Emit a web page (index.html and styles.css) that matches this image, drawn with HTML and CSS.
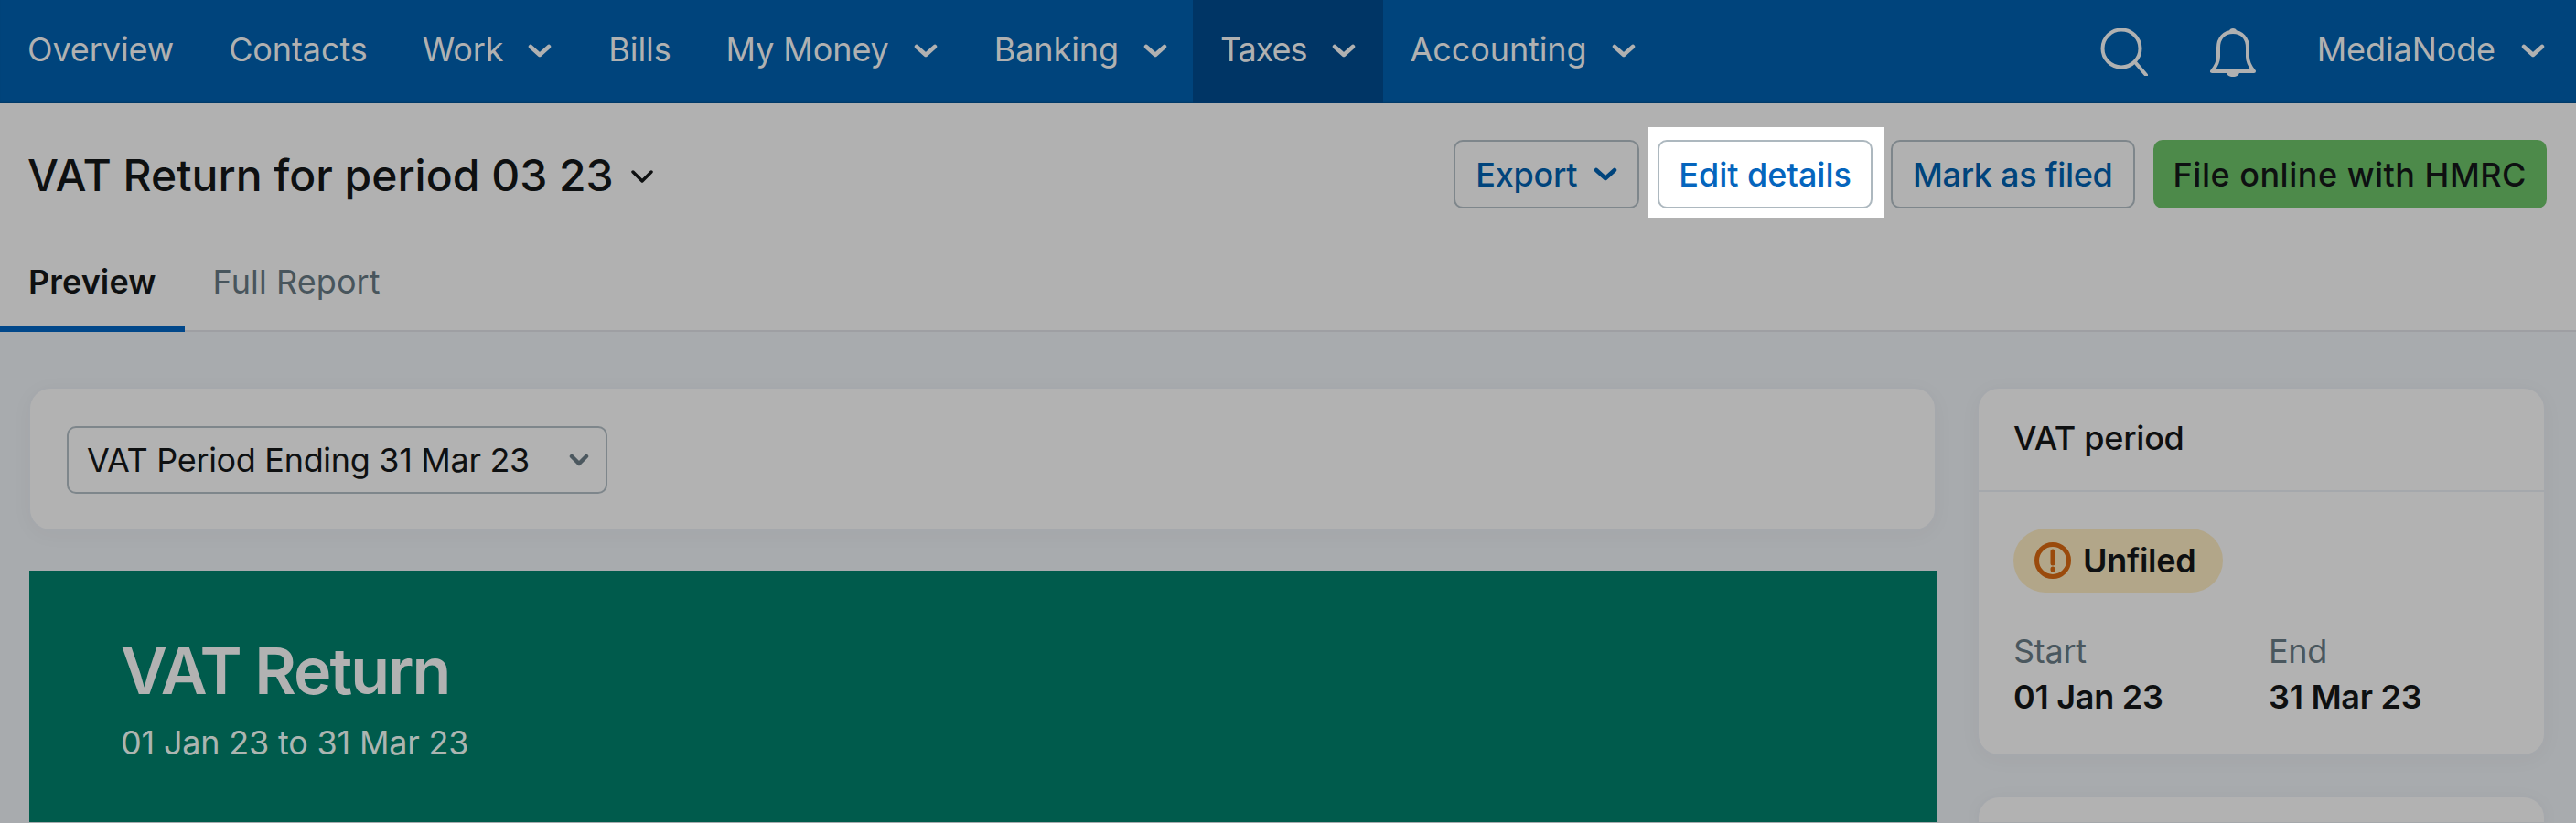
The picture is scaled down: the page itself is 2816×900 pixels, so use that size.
FILE: index.html
```html
<!DOCTYPE html>
<html lang="en">
<head>
    <meta charset="UTF-8">
    <title>VAT Return for period 03 23</title>
    <link rel="stylesheet" href="styles.css">
</head>
<body>
    <nav class="topnav">
        <a class="nav-item">Overview</a>
        <a class="nav-item">Contacts</a>
        <a class="nav-item">Work <svg class="chev" viewBox="0 0 26 15"><path d="M3 3l10 9 10-9"/></svg></a>
        <a class="nav-item">Bills</a>
        <a class="nav-item">My Money <svg class="chev" viewBox="0 0 26 15"><path d="M3 3l10 9 10-9"/></svg></a>
        <a class="nav-item">Banking <svg class="chev" viewBox="0 0 26 15"><path d="M3 3l10 9 10-9"/></svg></a>
        <a class="nav-item active">Taxes <svg class="chev" viewBox="0 0 26 15"><path d="M3 3l10 9 10-9"/></svg></a>
        <a class="nav-item">Accounting <svg class="chev" viewBox="0 0 26 15"><path d="M3 3l10 9 10-9"/></svg></a>
        <div class="nav-right">
            <svg class="icon-search" viewBox="0 0 52 52"><circle cx="23" cy="22" r="20.5"/><path d="M38 37l12 14"/></svg>
            <svg class="icon-bell" viewBox="0 0 50 54"><path d="M25 5c-10 0-16 7-16 17v10c0 6-2 10-7 16h46c-5-6-7-10-7-16V22c0-10-6-17-16-17z"/><path class="solid" d="M18 49h14c0 3-3 5-7 5s-7-2-7-5zM21 4c0-4 8-4 8 0v3h-8z"/></svg>
            <a class="nav-user">MediaNode <svg class="chev" viewBox="0 0 26 15"><path d="M3 3l10 9 10-9"/></svg></a>
        </div>
    </nav>

    <header class="page-head">
        <div class="title-row">
            <h1>VAT Return for period 03 23 <svg class="title-chev" viewBox="0 0 26 15"><path d="M3 2l10 10 10-10"/></svg></h1>
            <div class="actions">
                <button class="btn">Export <svg class="btn-chev" viewBox="0 0 26 15"><path d="M3 3l10 9 10-9"/></svg></button>
                <span class="spotlight"><button class="btn btn-edit">Edit details</button></span>
                <button class="btn">Mark as filed</button>
                <button class="btn btn-green">File online with HMRC</button>
            </div>
        </div>
        <div class="tabs">
            <a class="tab active">Preview</a>
            <a class="tab">Full Report</a>
        </div>
    </header>

    <main class="content">
        <section class="left-col">
            <div class="card period-card">
                <div class="select">VAT Period Ending 31 Mar 23 <svg class="select-chev" viewBox="0 0 22 14"><path d="M3 3l8 8 8-8"/></svg></div>
            </div>
            <div class="banner">
                <h2>VAT Return</h2>
                <p>01 Jan 23 to 31 Mar 23</p>
            </div>
        </section>
        <aside class="side-col">
            <div class="card side-card">
                <div class="side-head">VAT period</div>
                <div class="side-body">
                    <span class="pill">
                        <svg class="icon-warn" viewBox="0 0 40 40"><circle cx="20" cy="20" r="17.5"/><path d="M20 10v13"/><path d="M20 29v1"/></svg>
                        Unfiled
                    </span>
                    <div class="dates">
                        <div class="date-col"><span class="date-label">Start</span><strong>01 Jan 23</strong></div>
                        <div class="date-col"><span class="date-label">End</span><strong>31 Mar 23</strong></div>
                    </div>
                </div>
            </div>
            <div class="card next-card"></div>
        </aside>
    </main>
</body>
</html>
```

FILE: styles.css
```css
* {
    box-sizing: border-box;
}
html, body {
    height: 100%;
}
body {
    margin: 0;
    height: 900px;
    overflow: hidden;
    display: flex;
    flex-direction: column;
    background-color: #a8abae;
    color: #0e1011;
    font-family: "Inter", "Liberation Sans", sans-serif;
    font-size: 36px;
    letter-spacing: -0.27px;
}
svg {
    fill: none;
    display: block;
}

/* top nav */
.topnav {
    height: 113px;
    flex-shrink: 0;
    display: flex;
    background-color: #00447c;
    color: #b0b1b1;
    letter-spacing: -0.1px;
    box-shadow: inset 0 -3px 2px -1px #003a69;
}
.nav-item {
    display: flex;
    align-items: center;
    gap: 27px;
    padding: 0 30px 6px;
}
.nav-item .chev {
    margin-right: 2px;
}
.nav-item.active {
    margin-left: -4px;
    padding-right: 28px;
    background-color: #003565;
    letter-spacing: -1px;
}
.chev {
    width: 26px;
    height: 15px;
    margin-top: 4px;
    stroke: #b0b1b1;
    stroke-width: 4.5;
    stroke-linecap: round;
    stroke-linejoin: round;
}
.nav-right {
    margin-left: auto;
    display: flex;
    align-items: center;
    padding-right: 34px;
}
.icon-search {
    width: 52px;
    height: 52px;
    stroke: #b0b1b1;
    stroke-width: 4;
    stroke-linecap: round;
    margin-right: 68px;
}
.icon-bell {
    width: 50px;
    height: 54px;
    stroke: #b0b1b1;
    stroke-width: 4;
    stroke-linejoin: round;
    margin-right: 67px;
}
.icon-bell .solid {
    fill: #b0b1b1;
    stroke: none;
}
.nav-user {
    display: flex;
    align-items: center;
    gap: 28px;
    padding-bottom: 6px;
}

/* page heading */
.page-head {
    height: 250px;
    flex-shrink: 0;
    padding-top: 40px;
    background-color: #b1b1b1;
    border-bottom: 2px solid #9e9fa3;
}
.title-row {
    height: 75px;
    display: flex;
    justify-content: space-between;
    align-items: center;
    padding: 0 32px 0 30px;
}
h1 {
    margin: 2px 0 0;
    font-size: 48px;
    font-weight: 500;
    letter-spacing: 0;
    display: flex;
    align-items: center;
    gap: 18px;
}
.title-chev {
    width: 26px;
    height: 15px;
    margin-top: 4px;
    stroke: #0e1011;
    stroke-width: 3.5;
    stroke-linecap: round;
    stroke-linejoin: round;
}
.actions {
    display: flex;
    gap: 20px;
}
.btn {
    height: 75px;
    padding: 0 22px;
    display: flex;
    align-items: center;
    gap: 18px;
    background: transparent;
    border: 2px solid #7e868b;
    border-radius: 10px;
    color: #00447c;
    font-family: inherit;
    font-size: 36px;
    font-weight: 500;
    letter-spacing: inherit;
}
.btn-chev {
    width: 26px;
    height: 15px;
    stroke: #00447c;
    stroke-width: 4.5;
    stroke-linecap: round;
    stroke-linejoin: round;
}
.spotlight {
    display: block;
    margin: -14px -13px -10px -10px;
    padding: 14px 13px 10px 10px;
    background-color: #fff;
}
.btn-edit {
    padding: 0 21px;
    background-color: #fff;
    border-color: #adb8bf;
    color: #0565bd;
    letter-spacing: 0;
}
.btn-green {
    padding: 0 20px;
    background-color: #4d8a4a;
    border-color: #4d8a4a;
    color: #0e1011;
    letter-spacing: 0.5px;
}

/* tabs */
.tabs {
    display: flex;
    height: 110px;
    margin-top: 25px;
    letter-spacing: 0.1px;
}
.tab {
    height: 110px;
    padding: 0 31px;
    display: flex;
    align-items: center;
    color: #48555c;
}
.tab.active {
    color: #0e1011;
    font-weight: 600;
    border-bottom: 7px solid #00478a;
    padding-top: 7px;
}

/* main area */
.content {
    flex: 1;
    min-height: 0;
    display: flex;
    gap: 44px;
    padding: 60px 33px 1px 31px;
}
.left-col {
    width: 2086px;
    flex-shrink: 0;
    display: flex;
    flex-direction: column;
    gap: 43px;
}
.side-col {
    flex: 1;
    min-width: 0;
    display: flex;
    flex-direction: column;
    gap: 43px;
}
.card {
    background-color: #b2b2b2;
    border: 2px solid #a5a8ac;
    border-radius: 24px;
    box-shadow: 0 4px 24px rgba(0,0,0,0.03);
}
.period-card {
    height: 158px;
    display: flex;
    align-items: center;
    padding: 2px 0 0 40px;
}
.select {
    width: 591px;
    height: 74px;
    display: flex;
    align-items: center;
    justify-content: space-between;
    padding: 0 18px 0 20px;
    border: 2px solid #7e868b;
    border-radius: 10px;
    letter-spacing: -0.32px;
}
.select-chev {
    width: 22px;
    height: 14px;
    stroke: #4c585f;
    stroke-width: 4.5;
    stroke-linecap: round;
    stroke-linejoin: round;
}
.banner {
    flex: 1;
    margin-left: 1px;
    padding: 66px 0 0 100px;
    background-color: #005b4c;
    color: #b2b2b2;
}
.banner h2 {
    margin: 0;
    font-size: 70px;
    font-weight: 600;
    letter-spacing: -2px;
    line-height: 88px;
}
.banner p {
    margin: 12px 0 0;
    line-height: 44px;
    letter-spacing: -0.2px;
    color: #acb5b1;
}

/* side cards */
.side-card {
    height: 404px;
}
.side-head {
    height: 113px;
    padding: 0 38px 4px;
    display: flex;
    align-items: center;
    border-bottom: 2px solid #a5a8ac;
    font-weight: 500;
}
.side-body {
    padding: 40px 38px 0;
}
.pill {
    width: 229px;
    height: 70px;
    display: flex;
    align-items: center;
    gap: 13px;
    padding-left: 23px;
    background-color: #b2a689;
    border-radius: 35px;
    font-weight: 600;
}
.icon-warn {
    width: 40px;
    height: 40px;
    stroke: #9a4a0c;
    stroke-width: 5;
    stroke-linecap: round;
}
.dates {
    display: flex;
    margin-top: 42px;
}
.date-col {
    flex: 0 0 279px;
    display: flex;
    flex-direction: column;
    gap: 6px;
}
.date-label {
    color: #4a575e;
}
.date-col strong {
    font-weight: 600;
}
.next-card {
    flex: 1;
    border-bottom: 0;
    border-radius: 24px 24px 0 0;
}
```
